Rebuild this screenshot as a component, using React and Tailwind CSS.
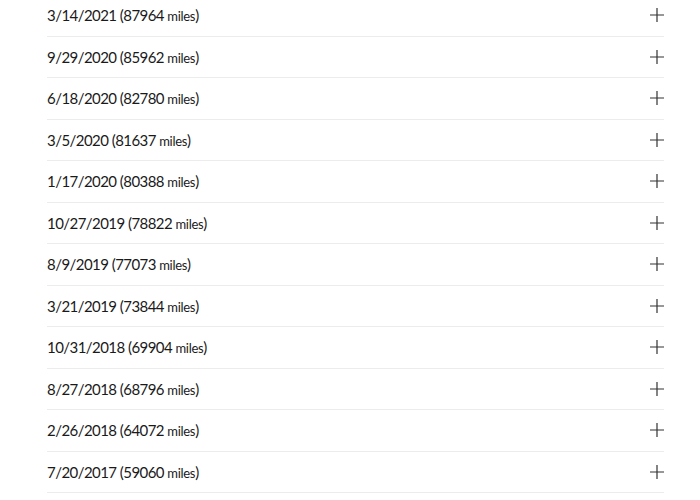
import React from 'react';

const entries = [
  ['3/14/2021', '87964'],
  ['9/29/2020', '85962'],
  ['6/18/2020', '82780'],
  ['3/5/2020', '81637'],
  ['1/17/2020', '80388'],
  ['10/27/2019', '78822'],
  ['8/9/2019', '77073'],
  ['3/21/2019', '73844'],
  ['10/31/2018', '69904'],
  ['8/27/2018', '68796'],
  ['2/26/2018', '64072'],
  ['7/20/2017', '59060'],
];

function PlusIcon() {
  return (
    <svg width="16" height="16" viewBox="0 0 16 16" fill="none" stroke="#333" strokeWidth="1.2">
      <path d="M8 1v14M1 8h14" />
    </svg>
  );
}

export default function App() {
  return (
    <div className="bg-white w-[700px] h-[500px] overflow-hidden" style={{ fontFamily: 'Lato, sans-serif' }}>
      <div className="-mt-[5px] ml-[47px] w-[617px]">
        {entries.map(([date, miles]) => (
          <div key={date} className="h-[41.5px] flex items-center justify-between border-b border-[#ececec]">
            <span className="text-[15px] tracking-[-0.55px] text-[#1a1a1a]">
              {date} ({miles} <span className="text-[13px] tracking-[-0.3px]">miles</span>)
            </span>
            <span className="mr-[-1px]"><PlusIcon /></span>
          </div>
        ))}
      </div>
    </div>
  );
}
